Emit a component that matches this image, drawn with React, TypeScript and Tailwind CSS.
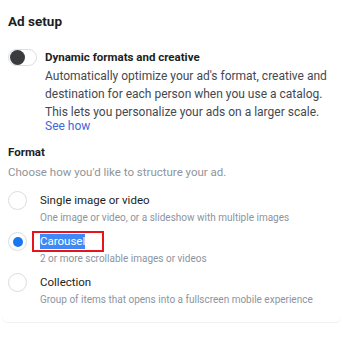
const options = [
  {
    id: "single",
    title: "Single image or video",
    hint: "One image or video, or a slideshow with multiple images",
  },
  {
    id: "carousel",
    title: "Carousel",
    hint: "2 or more scrollable images or videos",
  },
  {
    id: "collection",
    title: "Collection",
    hint: "Group of items that opens into a fullscreen mobile experience",
  },
];

export default function App() {
  const selected = "carousel";

  return (
    <div className="h-[338px] w-[343px] bg-white px-[2px] font-['Roboto',sans-serif]">
      <div className="h-[322px] rounded-b-md px-[6px] pt-[12px] shadow-[0_1px_1px_rgba(0,0,0,0.06)]">
        <h2 className="text-[13.5px] font-bold leading-[18px] text-[#1c1e21]">
          Ad setup
        </h2>

        <div className="mt-[18px] flex items-start gap-[8px]">
          <div className="mt-[1px] flex h-[17px] w-[29px] shrink-0 items-center rounded-full border border-[#dadde1] bg-white pl-[1px]">
            <div className="h-[15px] w-[15px] rounded-full bg-[#3a3b3c]" />
          </div>
          <div>
            <div className="text-[11.5px] font-bold leading-[18px] text-[#1c1e21]">
              Dynamic formats and creative
            </div>
            <p className="mt-[1px] text-[12px] leading-[18px] text-[#444950]">
              Automatically optimize your ad's format, creative and destination
              for each person when you use a catalog. This lets you personalize
              your ads on a larger scale.
            </p>
            <a className="mt-[-3px] block text-[12px] leading-[16px] text-[#4267d8]">
              See how
            </a>
          </div>
        </div>

        <h3 className="mt-[9px] text-[11.5px] font-bold leading-[18px] text-[#1c1e21]">
          Format
        </h3>
        <p className="mt-[2px] text-[11.5px] leading-[18px] text-[#90949c]">
          Choose how you'd like to structure your ad.
        </p>

        <div className="mt-[10px] flex flex-col gap-[7px]">
          {options.map((option) => {
            const active = option.id === selected;
            return (
              <div key={option.id} className="flex items-start gap-[13px]">
                <div className="flex h-[19px] w-[19px] shrink-0 items-center justify-center rounded-full border border-[#dadde1] bg-white">
                  {active && (
                    <div className="h-[10px] w-[10px] rounded-full bg-[#1877f2]" />
                  )}
                </div>
                <div>
                  {active ? (
                    <div className="my-[-1.5px] ml-[-8px] flex h-[21px] w-[72px] items-center border-2 border-[#e8141c] pl-[6px]">
                      <span className="bg-[#3d8af7] text-[11.5px] leading-[15px] text-white">
                        {option.title}
                      </span>
                    </div>
                  ) : (
                    <div className="text-[11.5px] leading-[18px] text-[#1c1e21]">
                      {option.title}
                    </div>
                  )}
                  <div className="mt-[2px] text-[10px] leading-[14px] text-[#8d949e]">
                    {option.hint}
                  </div>
                </div>
              </div>
            );
          })}
        </div>
      </div>
    </div>
  );
}
